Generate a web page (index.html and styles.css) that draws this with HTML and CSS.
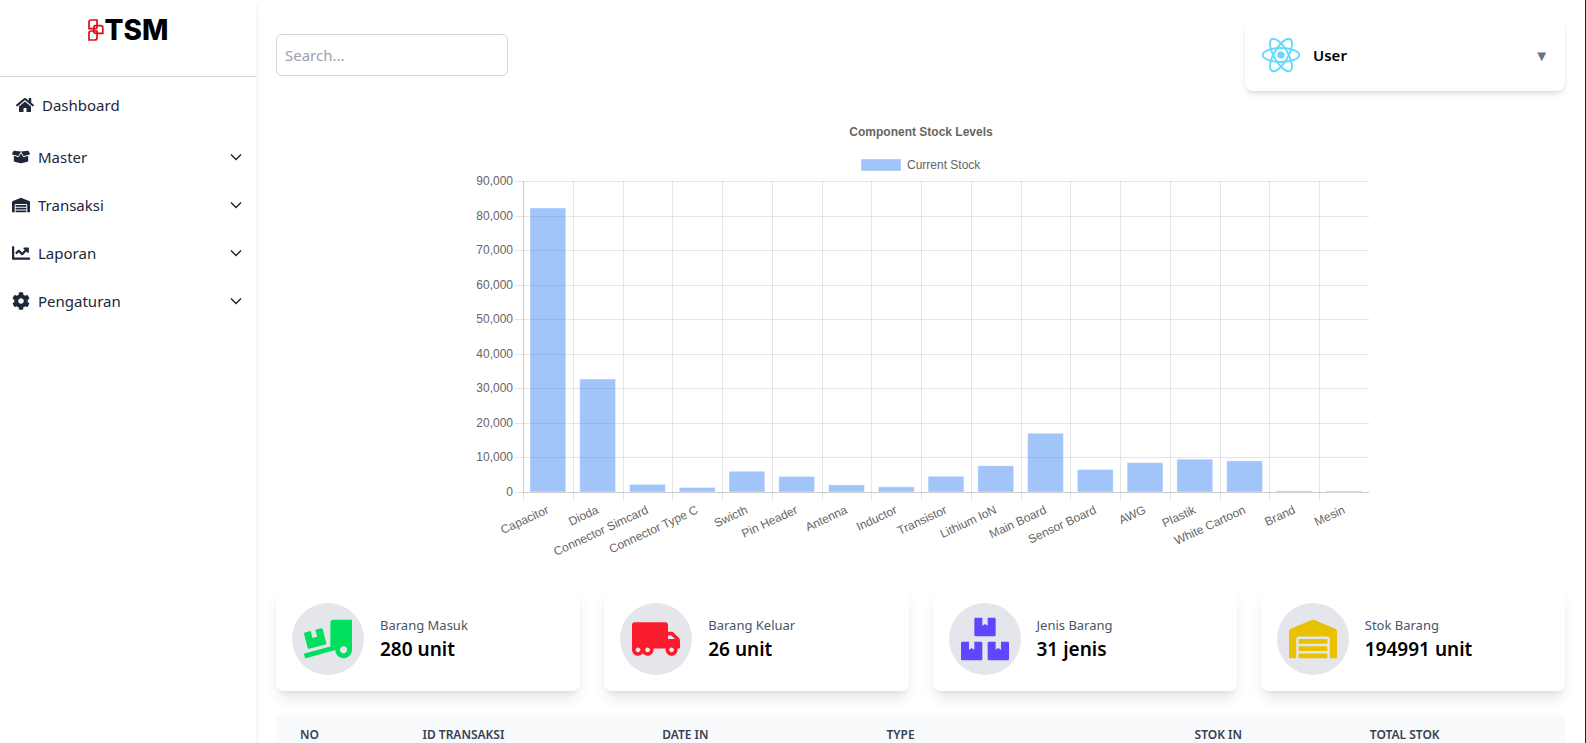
FILE: index.html
```html
<!DOCTYPE html>
<html lang="id">
<head>
<meta charset="utf-8">
<title>TSM Dashboard</title>
<meta name="viewport" content="width=device-width, initial-scale=1">
<link rel="stylesheet" href="styles.css">
</head>
<body>
<aside class="sidebar">
  <div class="brand">
    <svg class="brand-mark" viewBox="0 0 16 22" aria-hidden="true">
      <g fill="none" stroke="#d90f14" stroke-width="1.7">
        <path d="M3 1h6v7.600q0 1-1 1H1V3Q1 1 3 1z"/>
        <path d="M7.400 6.600h5.400q2 0 2 2v5.800h-7q-1.900 0-1.900-1.900V8q0-1.400 1.500-1.400z"/>
        <path d="M3 12h6v7q0 2-2 2H1v-7q0-2 2-2z"/>
      </g>
    </svg>
    <span class="brand-name">TSM</span>
  </div>
  <nav class="nav">
    <a class="nav-home" href="#">
      <svg class="nav-icon" viewBox="0 0 576 512" aria-hidden="true"><path d="M280.37 148.26L96 300.11V464a16 16 0 0 0 16 16l112.06-.29a16 16 0 0 0 15.92-16V368a16 16 0 0 1 16-16h64a16 16 0 0 1 16 16v95.64a16 16 0 0 0 16 16.05L464 480a16 16 0 0 0 16-16V300L295.67 148.26a12.19 12.19 0 0 0-15.3 0zM571.6 251.47L488 182.56V44.05a12 12 0 0 0-12-12h-56a12 12 0 0 0-12 12v72.61L318.47 43a48 48 0 0 0-61 0L4.34 251.47a12 12 0 0 0-1.6 16.9l25.5 31A12 12 0 0 0 45.15 301l235.22-193.74a12.19 12.19 0 0 1 15.3 0L530.9 301a12 12 0 0 0 16.9-1.600l25.5-31a12 12 0 0 0-1.700-16.930z"/></svg>
      <span>Dashboard</span>
    </a>
    <button class="nav-group" type="button">
      <svg class="nav-icon" viewBox="0 0 640 512" aria-hidden="true"><path d="M425.7 256c-16.9 0-32.8-9-41.4-23.4L320 126l-64.2 106.600c-8.700 14.500-24.600 23.500-41.500 23.500-4.500 0-9-.6-13.300-1.900L64 215v178c0 14.700 10 27.500 24.200 31l216.200 54.100c10.200 2.500 20.900 2.500 31 0L551.800 424c14.200-3.600 24.200-16.400 24.200-31V215l-137 39.100c-4.300 1.300-8.800 1.900-13.300 1.900zm212.600-112.200L586.800 41c-3.100-6.200-9.800-9.800-16.700-8.900L320 64l91.700 152.100c3.800 6.300 11.400 9.300 18.500 7.300l197.900-56.500c9.900-2.900 14.700-13.900 10.200-23.100zM53.200 41L1.700 143.800c-4.600 9.200.3 20.200 10.100 23l197.900 56.500c7.100 2 14.700-1 18.500-7.300L320 64 69.800 32.100c-6.900-.8-13.500 2.700-16.600 8.900z"/></svg>
      <span>Master</span>
      <svg class="chevron" viewBox="0 0 16 16" aria-hidden="true"><path d="M3 5.500l5 5 5-5"/></svg>
    </button>
    <button class="nav-group" type="button">
      <svg class="nav-icon" viewBox="0 0 640 512" aria-hidden="true"><path d="M504 352H136.400c-4.400 0-8 3.600-8 8l-.1 48c0 4.400 3.600 8 8 8H504c4.400 0 8-3.600 8-8v-48c0-4.400-3.600-8-8-8zm0 96H136.100c-4.400 0-8 3.600-8 8l-.1 48c0 4.400 3.600 8 8 8h368c4.400 0 8-3.600 8-8v-48c0-4.400-3.600-8-8-8zm0-192H136.600c-4.400 0-8 3.600-8 8l-.1 48c0 4.400 3.600 8 8 8H504c4.400 0 8-3.600 8-8v-48c0-4.400-3.600-8-8-8zm106.500-139L338.400 3.700a48.150 48.150 0 0 0-36.900 0L29.500 117C11.700 124.500 0 141.900 0 161.300V504c0 4.400 3.600 8 8 8h80c4.400 0 8-3.600 8-8V256c0-17.600 14.600-32 32.600-32h382.800c18 0 32.600 14.400 32.600 32v248c0 4.400 3.600 8 8 8h80c4.400 0 8-3.600 8-8V161.300c0-19.400-11.700-36.800-29.500-44.300z"/></svg>
      <span>Transaksi</span>
      <svg class="chevron" viewBox="0 0 16 16" aria-hidden="true"><path d="M3 5.500l5 5 5-5"/></svg>
    </button>
    <button class="nav-group" type="button">
      <svg class="nav-icon" viewBox="0 0 512 512" aria-hidden="true"><path d="M496 384H64V80c0-8.840-7.160-16-16-16H16C7.160 64 0 71.160 0 80v336c0 17.670 14.330 32 32 32h464c8.840 0 16-7.160 16-16v-32c0-8.840-7.160-16-16-16zM464 96H345.940c-21.380 0-32.090 25.850-16.970 40.970l32.400 32.400L288 242.750l-73.370-73.370c-12.500-12.500-32.760-12.500-45.250 0l-68.690 68.690c-6.250 6.250-6.250 16.380 0 22.630l22.620 22.620c6.250 6.250 16.380 6.250 22.630 0L192 237.250l73.370 73.370c12.500 12.500 32.760 12.500 45.250 0l96-96 32.400 32.400c15.120 15.120 40.970 4.410 40.970-16.970V112c.01-8.840-7.150-16-15.990-16z"/></svg>
      <span>Laporan</span>
      <svg class="chevron" viewBox="0 0 16 16" aria-hidden="true"><path d="M3 5.500l5 5 5-5"/></svg>
    </button>
    <button class="nav-group" type="button">
      <svg class="nav-icon" viewBox="0 0 512 512" aria-hidden="true"><path d="M487.400 315.700l-42.600-24.600c4.300-23.200 4.300-47 0-70.200l42.600-24.600c4.900-2.800 7.100-8.600 5.500-14-11.100-35.600-30-67.800-54.700-94.600-3.800-4.100-10-5.100-14.800-2.300L380.800 110c-17.900-15.400-38.500-27.300-60.800-35.100V25.800c0-5.600-3.900-10.500-9.400-11.700-36.700-8.200-74.300-7.800-109.200 0-5.500 1.200-9.400 6.100-9.400 11.700V75c-22.200 7.900-42.800 19.800-60.800 35.100L88.700 85.500c-4.900-2.800-11-1.900-14.800 2.300-24.700 26.700-43.600 58.900-54.700 94.600-1.700 5.400.6 11.200 5.500 14L67.300 221c-4.300 23.200-4.300 47 0 70.200l-42.600 24.600c-4.900 2.800-7.100 8.600-5.500 14 11.100 35.600 30 67.800 54.700 94.600 3.800 4.100 10 5.100 14.800 2.300l42.600-24.600c17.900 15.400 38.500 27.300 60.800 35.100v49.200c0 5.600 3.900 10.500 9.400 11.700 36.700 8.200 74.300 7.800 109.200 0 5.500-1.200 9.400-6.100 9.400-11.700v-49.200c22.200-7.900 42.800-19.800 60.800-35.100l42.600 24.600c4.900 2.800 11 1.900 14.800-2.300 24.700-26.700 43.600-58.900 54.700-94.600 1.500-5.500-.7-11.300-5.600-14.100zM256 336c-44.100 0-80-35.900-80-80s35.900-80 80-80 80 35.900 80 80-35.900 80-80 80z"/></svg>
      <span>Pengaturan</span>
      <svg class="chevron" viewBox="0 0 16 16" aria-hidden="true"><path d="M3 5.500l5 5 5-5"/></svg>
    </button>
  </nav>
</aside>

<main class="main">
  <header class="topbar">
    <input class="search" type="search" placeholder="Search..." aria-label="Search">
    <button class="user" type="button">
      <svg class="user-logo" viewBox="0 0 256 228" aria-hidden="true">
        <g fill="none" stroke="#61dafb" stroke-width="12">
          <ellipse cx="128" cy="114" rx="117" ry="45"/>
          <ellipse cx="128" cy="114" rx="117" ry="45" transform="rotate(60 128 114)"/>
          <ellipse cx="128" cy="114" rx="117" ry="45" transform="rotate(120 128 114)"/>
        </g>
        <circle cx="128" cy="114" r="23" fill="#61dafb"/>
      </svg>
      <span class="user-name">User</span>
      <span class="user-caret">▼</span>
    </button>
  </header>

  <svg class="chart" id="stock-chart" viewBox="0 0 896 448" role="img" aria-label="Component Stock Levels"></svg>

  <section class="stats">
    <article class="stat">
      <div class="stat-badge">
        <svg class="stat-icon stat-icon-in" viewBox="0 0 640 512" aria-hidden="true"><path d="M50.200 375.600c2.300 8.500 11.100 13.600 19.600 11.300l216.400-58c8.500-2.300 13.600-11.100 11.300-19.600l-49.700-185.500c-2.300-8.500-11.100-13.600-19.600-11.300L151 133.300l24.800 92.700-61.800 16.500-24.800-92.700-77.300 20.700C3.400 172.800-1.700 181.600.6 190.100l49.600 185.500zM384 0c-17.700 0-32 14.300-32 32v323.600L5.900 450c-4.300 1.200-6.800 5.600-5.600 9.800l12.600 46.300c1.200 4.300 5.600 6.800 9.800 5.600l393.700-107.400C418.800 464.100 467.600 512 528 512c61.900 0 112-50.100 112-112V0H384zm144 448c-26.500 0-48-21.500-48-48s21.500-48 48-48 48 21.500 48 48-21.500 48-48 48z"/></svg>
      </div>
      <div class="stat-text"><p class="stat-label">Barang Masuk</p><p class="stat-value">280 unit</p></div>
    </article>
    <article class="stat">
      <div class="stat-badge">
        <svg class="stat-icon stat-icon-out" viewBox="0 0 640 512" aria-hidden="true"><path d="M621.300 237.300l-58.500-58.500c-12-12-28.300-18.700-45.300-18.700H480V64c0-17.700-14.300-32-32-32H32C14.300 32 0 46.300 0 64v336c0 44.200 35.800 80 80 80 26.300 0 49.400-12.900 64-32.400 14.600 19.600 37.700 32.400 64 32.400 44.200 0 80-35.800 80-80 0-5.500-.6-10.800-1.600-16h163.200c-1.100 5.200-1.600 10.500-1.600 16 0 44.200 35.800 80 80 80s80-35.800 80-80c0-5.500-.6-10.800-1.600-16H624c8.800 0 16-7.200 16-16v-85.500c0-17-6.700-33.200-18.700-45.200zM80 432c-17.600 0-32-14.400-32-32s14.400-32 32-32 32 14.400 32 32-14.400 32-32 32zm128 0c-17.600 0-32-14.400-32-32s14.400-32 32-32 32 14.400 32 32-14.400 32-32 32zm272-224h37.500c4.300 0 8.300 1.700 11.300 4.700l43.300 43.300H480v-48zm48 224c-17.600 0-32-14.400-32-32s14.400-32 32-32 32 14.400 32 32-14.400 32-32 32z"/></svg>
      </div>
      <div class="stat-text"><p class="stat-label">Barang Keluar</p><p class="stat-value">26 unit</p></div>
    </article>
    <article class="stat">
      <div class="stat-badge">
        <svg class="stat-icon stat-icon-types" viewBox="0 0 576 512" aria-hidden="true"><path d="M560 288h-80v96l-32-21.300-32 21.300v-96h-80c-8.800 0-16 7.200-16 16v192c0 8.800 7.200 16 16 16h224c8.800 0 16-7.200 16-16V304c0-8.800-7.200-16-16-16zm-384-64h224c8.800 0 16-7.200 16-16V16c0-8.800-7.200-16-16-16h-80v96l-32-21.300L256 96V0h-80c-8.800 0-16 7.200-16 16v192c0 8.800 7.200 16 16 16zm64 64h-80v96l-32-21.300L96 384v-96H16c-8.800 0-16 7.200-16 16v192c0 8.800 7.200 16 16 16h224c8.800 0 16-7.200 16-16V304c0-8.800-7.200-16-16-16z"/></svg>
      </div>
      <div class="stat-text"><p class="stat-label">Jenis Barang</p><p class="stat-value">31 jenis</p></div>
    </article>
    <article class="stat">
      <div class="stat-badge">
        <svg class="stat-icon stat-icon-stock" viewBox="0 0 640 512" aria-hidden="true"><path d="M504 352H136.400c-4.400 0-8 3.600-8 8l-.1 48c0 4.400 3.600 8 8 8H504c4.400 0 8-3.600 8-8v-48c0-4.400-3.600-8-8-8zm0 96H136.100c-4.400 0-8 3.600-8 8l-.1 48c0 4.400 3.600 8 8 8h368c4.400 0 8-3.600 8-8v-48c0-4.400-3.600-8-8-8zm0-192H136.600c-4.400 0-8 3.600-8 8l-.1 48c0 4.400 3.600 8 8 8H504c4.400 0 8-3.600 8-8v-48c0-4.400-3.600-8-8-8zm106.500-139L338.400 3.700a48.150 48.150 0 0 0-36.900 0L29.500 117C11.700 124.500 0 141.900 0 161.300V504c0 4.400 3.600 8 8 8h80c4.400 0 8-3.600 8-8V256c0-17.600 14.600-32 32.600-32h382.800c18 0 32.600 14.400 32.600 32v248c0 4.400 3.600 8 8 8h80c4.400 0 8-3.600 8-8V161.300c0-19.400-11.700-36.800-29.500-44.300z"/></svg>
      </div>
      <div class="stat-text"><p class="stat-label">Stok Barang</p><p class="stat-value">194991 unit</p></div>
    </article>
  </section>

  <table class="transactions">
    <colgroup><col class="col-no"><col class="col-id"><col class="col-date"><col class="col-type"><col class="col-in"><col class="col-total"></colgroup>
    <thead>
      <tr><th scope="col">No</th><th scope="col">ID Transaksi</th><th scope="col">Date In</th><th scope="col">Type</th><th scope="col">Stok In</th><th scope="col">Total Stok</th></tr>
    </thead>
  </table>
</main>
<script src="chart.js"></script>
</body>
</html>
```

FILE: styles.css
```css
*, *::before, *::after { box-sizing: border-box; }

body {
  margin: 0;
  height: 100vh;
  display: flex;
  overflow: hidden;
  border-right: 1px solid #25262b;
  background: #fff;
  color: #000;
  font-family: "Noto Sans", "Open Sans", sans-serif;
  font-size: 15px;
  line-height: 24px;
}

button, input { font: inherit; color: inherit; }
p { margin: 0; }

/* Sidebar */
.sidebar {
  flex: 0 0 256px;
  background: #fff;
  box-shadow: 0 4px 6px -1px rgba(0, 0, 0, .1), 0 2px 4px -2px rgba(0, 0, 0, .1);
}
.brand {
  height: 77px;
  padding-top: 18px;
  display: flex;
  justify-content: center;
  align-items: flex-start;
  gap: 1px;
  border-bottom: 1px solid #d1d5dc;
}
.brand-mark { width: 16px; height: 22px; margin-top: 1px; }
.brand-name {
  font-family: Inter, "Liberation Sans", sans-serif;
  font-size: 28px;
  font-weight: 800;
  line-height: 24px;
}
.nav { display: flex; flex-direction: column; color: #1e2639; }
.nav-home {
  height: 56px;
  padding: 0 16px;
  display: flex;
  align-items: center;
  gap: 8px;
  color: inherit;
  text-decoration: none;
}
.nav-group {
  height: 48px;
  padding: 0 12px;
  display: flex;
  align-items: center;
  gap: 8px;
  border: 0;
  background: none;
  text-align: left;
}
.nav-icon { width: 18px; height: 18px; fill: currentColor; }
.chevron {
  width: 16px;
  height: 16px;
  margin-left: auto;
  fill: none;
  stroke: currentColor;
  stroke-width: 1.5;
}

/* Content */
.main {
  flex: 1;
  min-width: 0;
  padding: 19px 20px;
  display: flex;
  flex-direction: column;
  gap: 24px;
}
.topbar { display: flex; justify-content: space-between; align-items: center; }
.search {
  width: 232px;
  height: 42px;
  padding: 8px;
  border: 1px solid #d1d5dc;
  border-radius: 6px;
  background: #fff;
  appearance: none;
}
.search::placeholder { color: #99a1af; opacity: 1; }
.user {
  width: 320px;
  height: 72px;
  padding: 16px;
  display: flex;
  align-items: center;
  gap: 12px;
  border: 0;
  border-radius: 8px;
  background: #fff;
  box-shadow: 0 4px 6px -1px rgba(0, 0, 0, .1), 0 2px 4px -2px rgba(0, 0, 0, .1);
}
.user-logo { width: 40px; height: 40px; }
.user-name { font-weight: 600; }
.user-caret { margin-left: auto; color: #6a7282; }

/* Chart */
.chart {
  width: 100%;
  max-width: 896px;
  flex: none;
  align-self: center;
  font-family: "Liberation Sans", Arial, sans-serif;
  font-size: 12px;
  fill: #666;
}
.chart-title { font-weight: 700; text-anchor: middle; }
.chart-tick { text-anchor: end; }
.chart-grid { stroke: rgba(0, 0, 0, .1); shape-rendering: crispEdges; }
.chart-bar { fill: rgba(67, 139, 243, .5); stroke: rgba(255, 255, 255, .4); }

/* Stat cards */
.stats { display: grid; grid-template-columns: repeat(4, 1fr); gap: 24px; }
.stat {
  padding: 16px;
  display: flex;
  align-items: center;
  gap: 16px;
  border-radius: 8px;
  background: #fff;
  box-shadow: 0 10px 15px -3px rgba(0, 0, 0, .1), 0 4px 6px -4px rgba(0, 0, 0, .1);
}
.stat-badge { padding: 12px; display: flex; border-radius: 50%; background: #e5e6ec; }
.stat-icon { width: 48px; height: 48px; fill: currentColor; }
.stat-icon-in { color: #00df5d; }
.stat-icon-out { color: #fb1b2c; }
.stat-icon-types { color: #5f47ff; }
.stat-icon-stock { color: #e8c100; }
.stat-label { font-size: 13px; line-height: 20px; color: #4a5565; }
.stat-value { font-size: 19px; line-height: 28px; font-weight: 600; }

/* Table */
.transactions {
  width: 100%;
  flex: none;
  table-layout: fixed;
  border-collapse: collapse;
  text-align: left;
}
.transactions thead { background: #f9fafb; }
.transactions th {
  padding: 12px 24px;
  font-size: 12px;
  line-height: 16px;
  font-weight: 600;
  text-transform: uppercase;
  color: #364153;
}
.col-no { width: 9.5%; }
.col-id { width: 18.6%; }
.col-date { width: 17.4%; }
.col-type { width: 23.9%; }
.col-in { width: 13.6%; }
.col-total { width: 17%; }
```

FILE: chart.js
```js
const stock = [
  ["Capacitor", 82200], ["Dioda", 32700], ["Connector Simcard", 2200],
  ["Connector Type C", 1300], ["Swicth", 6000], ["Pin Header", 4500],
  ["Antenna", 2050], ["Inductor", 1500], ["Transistor", 4550],
  ["Lithium IoN", 7600], ["Main Board", 17000], ["Sensor Board", 6500],
  ["AWG", 8500], ["Plastik", 9500], ["White Cartoon", 9000],
  ["Brand", 330], ["Mesin", 300]
];

const svg = document.getElementById("stock-chart");
const plot = { left: 50, right: 896, top: 66, bottom: 377 };
const max = 90000;
const step = 10000;

function add(name, attrs, text) {
  const el = document.createElementNS("http://www.w3.org/2000/svg", name);
  for (const key in attrs) el.setAttribute(key, attrs[key]);
  if (text) el.textContent = text;
  svg.appendChild(el);
}
function line(x1, y1, x2, y2) {
  add("line", { class: "chart-grid", x1, y1, x2, y2 });
}
const yOf = value => plot.bottom - (value / max) * (plot.bottom - plot.top);

add("text", { class: "chart-title", x: 448, y: 21 }, "Component Stock Levels");
add("rect", { class: "chart-bar", x: 388, y: 44, width: 40, height: 12 });
add("text", { x: 434, y: 54 }, "Current Stock");

for (let v = 0; v <= max; v += step) {
  const y = Math.round(yOf(v)) + 0.5;
  line(plot.left - 8, y, plot.right, y);
  add("text", { class: "chart-tick", x: plot.left - 10, y: y + 3 }, v.toLocaleString("en-US"));
}

const slot = (plot.right - plot.left) / stock.length;
stock.forEach(([name, value], i) => {
  const x = Math.round(plot.left + i * slot) + 0.5;
  const center = plot.left + (i + 0.5) * slot;
  line(x, plot.top, x, plot.bottom + 8);
  add("rect", {
    class: "chart-bar",
    x: center - slot * 0.36, y: yOf(value),
    width: slot * 0.72, height: plot.bottom - yOf(value)
  });
  add("text", {
    class: "chart-tick", x: center, y: 398,
    transform: `rotate(-25 ${center} 394)`
  }, name);
});

// axis borders
line(plot.left + 0.5, plot.top, plot.left + 0.5, plot.bottom);
line(plot.left, plot.bottom + 0.5, plot.right, plot.bottom + 0.5);
```
